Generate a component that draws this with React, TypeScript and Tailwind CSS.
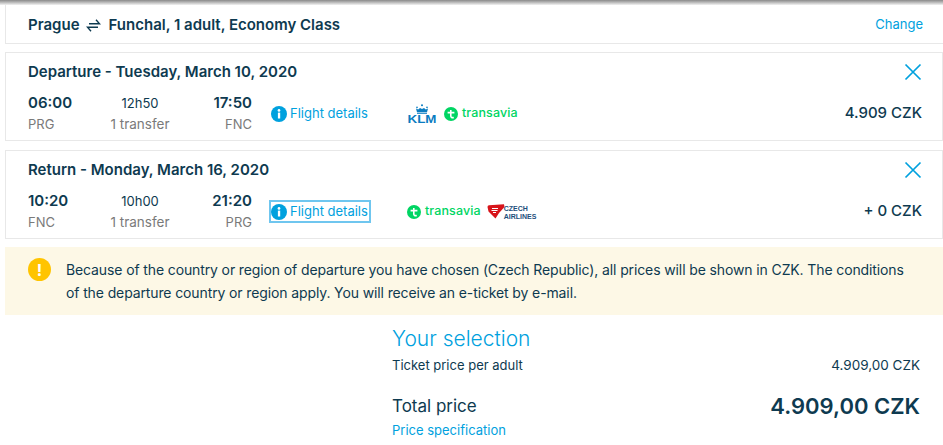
import React from 'react';

const InfoIcon = () => (
    <svg width="16" height="16" viewBox="0 0 16 16" className="shrink-0">
        <circle cx="8" cy="8" r="8" fill="#00a1de" />
        <rect x="6.9" y="6.6" width="2.3" height="5.9" fill="#fff" />
        <circle cx="8" cy="4.4" r="1.35" fill="#fff" />
    </svg>
);

const CloseIcon = () => (
    <svg width="18" height="18" viewBox="0 0 18 18" fill="none" stroke="#00a1de" strokeWidth="1.7" className="shrink-0">
        <path d="M1.5 1.5l15 15M16.5 1.5l-15 15" />
    </svg>
);

const SwapIcon = () => (
    <svg width="15" height="15" viewBox="0 0 15 15" fill="none" stroke="#0e3a50" strokeWidth="1.4" className="shrink-0">
        <path d="M3 5.8h10.5L10 1.8" />
        <path d="M12 9.2H1.5L5 13.2" />
    </svg>
);

const KlmLogo = () => (
    <svg width="30" height="22" viewBox="0 0 30 22" className="shrink-0">
        <g fill="#0a7cc1">
            <circle cx="15" cy="2.2" r="1" />
            <circle cx="10" cy="4.4" r="0.8" />
            <circle cx="20" cy="4.4" r="0.8" />
            <path d="M9 5.6l2.2 1 1.8-1.6 2 1 2-1 1.8 1.6 2.2-1-1 3.6H10z" />
            <rect x="10" y="9.8" width="10" height="1" />
        </g>
        <text x="15" y="19.6" textAnchor="middle" fontFamily="'Liberation Sans', sans-serif" fontWeight="700" fontSize="11" fill="#0a7cc1" textLength="29" lengthAdjust="spacingAndGlyphs">KLM</text>
    </svg>
);

const TransaviaLogo = () => (
    <div className="flex items-center gap-[4px] shrink-0">
        <svg width="14" height="14" viewBox="0 0 14 14">
            <circle cx="7" cy="7" r="7" fill="#00d563" />
            <path d="M3.6 5.6h6.8M6.8 3v6c0 1.4 1.1 1.9 3 1.4" fill="none" stroke="#fff" strokeWidth="1.6" />
        </svg>
        <span className="text-[12.5px] leading-none font-medium tracking-[0.1px] text-[#00d563]">transavia</span>
    </div>
);

const CsaLogo = () => (
    <div className="flex items-center shrink-0 -ml-[1px]">
        <svg width="18" height="15" viewBox="0 0 18 15">
            <path d="M0.5 3Q0.5 1.5 2 1.3L17 0.3 17.5 3 12 9 8.5 14.5Q4 10 1.5 7.5z" fill="#d7141a" />
            <path d="M5 4.5h6M4.5 6.5h6M6 8.5h3" stroke="#fff" strokeWidth="1" />
        </svg>
        <span className="font-['Liberation_Sans',sans-serif] text-[7px] leading-[8px] font-bold text-[#1d4f7c] -ml-[1px] mt-[3px]">
            CZECH<br />AIRLINES
        </span>
    </div>
);

interface FlightCardProps {
    title: string;
    depart: string;
    from: string;
    duration: string;
    arrive: string;
    to: string;
    price: string;
    focused?: boolean;
    logos: React.ReactNode;
}

const FlightCard: React.FC<FlightCardProps> = ({ title, depart, from, duration, arrive, to, price, focused, logos }) => (
    <div className="h-[89px] ml-[5px] border border-[#e8e8e8] pl-[22px] pr-[20px] flex flex-col">
        <div className="flex items-start justify-between pt-[9px] h-[40px]">
            <h2 className="text-[15px] leading-[20px] font-semibold text-[#0e3a50]">{title}</h2>
            <div className="mt-[1px]"><CloseIcon /></div>
        </div>
        <div className="flex items-center">
            <div className="w-[224px] grid grid-cols-[1fr_1fr_1fr] shrink-0">
                <div className="text-[15px] leading-[20px] font-semibold text-[#0e3a50]">{depart}</div>
                <div className="text-[13px] leading-[20px] text-center text-[#0e3a50]">{duration}</div>
                <div className="text-[15px] leading-[20px] font-semibold text-right text-[#0e3a50]">{arrive}</div>
                <div className="text-[13px] leading-[20px] mt-[1px] text-[#7a7a7a]">{from}</div>
                <div className="text-[13.5px] leading-[20px] mt-[1px] text-center text-[#7a7a7a]">1 transfer</div>
                <div className="text-[13px] leading-[20px] mt-[1px] text-right text-[#7a7a7a]">{to}</div>
            </div>
            <a className={focused ? "ml-[18px] flex items-center gap-[3px] h-[21px] w-[100px] outline-2 outline-[#6fc6ef] -outline-offset-1 text-[13px] text-[#00a1de] pl-[1px] shrink-0 whitespace-nowrap" : "ml-[19px] flex items-center gap-[3px] h-[21px] w-[99px] text-[13px] text-[#00a1de] shrink-0 whitespace-nowrap"}>
                <InfoIcon />
                <span>Flight details</span>
            </a>
            <div className="ml-[37px] flex items-center gap-[7px]">{logos}</div>
            <div className="ml-auto text-[15px] font-medium text-[#0e3a50]">{price}</div>
        </div>
    </div>
);

export default function App() {
    return (
        <div className="w-[943px] h-[445px] overflow-hidden bg-white font-['Inter',sans-serif] text-[#0e3a50]">
            <div className="h-[5px] bg-gradient-to-b from-[#8a8a8a] to-[#f2f2f2]" />
            <div className="h-[39px] ml-[5px] border-b border-l border-[#e8e8e8] pl-[22px] pr-[20px] pt-[2px] flex items-center justify-between">
                <div className="flex items-center text-[15px] font-semibold">
                    <span>Prague</span>
                    <span className="ml-[6px] mr-[8px]"><SwapIcon /></span>
                    <span>Funchal, 1 adult, Economy Class</span>
                </div>
                <a className="text-[13px] text-[#00a1de]">Change</a>
            </div>

            <div className="mt-[8px] flex flex-col gap-[9px]">
                <FlightCard
                    title="Departure - Tuesday, March 10, 2020"
                    depart="06:00"
                    from="PRG"
                    duration="12h50"
                    arrive="17:50"
                    to="FNC"
                    price="4.909 CZK"
                    logos={<><KlmLogo /><TransaviaLogo /></>}
                />
                <FlightCard
                    title="Return - Monday, March 16, 2020"
                    depart="10:20"
                    from="FNC"
                    duration="10h00"
                    arrive="21:20"
                    to="PRG"
                    price="+ 0 CZK"
                    focused
                    logos={<><TransaviaLogo /><CsaLogo /></>}
                />
            </div>

            <div className="mt-[8px] ml-[5px] h-[68px] bg-[#fdf8e6] flex pl-[23px] pt-[11px]">
                <div className="w-[23px] h-[23px] rounded-full bg-[#ffc400] text-white flex items-center justify-center text-[16px] font-bold shrink-0">!</div>
                <p className="ml-[15px] w-[850px] text-[14px] leading-[23px] tracking-[-0.12px]">
                    Because of the country or region of departure you have chosen (Czech Republic), all prices will be shown in CZK. The conditions of the departure country or region apply. You will receive an e-ticket by e-mail.
                </p>
            </div>

            <div className="ml-[392px] w-[528px] mt-[10px]">
                <h3 className="text-[21px] leading-[28px] font-light text-[#00a1de]">Your selection</h3>
                <div className="mt-[2px] flex justify-between items-center text-[13px] leading-[20px]">
                    <span>Ticket price per adult</span>
                    <span className="text-[13.5px]">4.909,00 CZK</span>
                </div>
                <div className="mt-[16px] flex justify-between items-center">
                    <span className="text-[17px] leading-[30px]">Total price</span>
                    <span className="text-[22px] leading-[30px] font-semibold">4.909,00 CZK</span>
                </div>
                <a className="block -mt-[1px] text-[13px] leading-[20px] text-[#00a1de]">Price specification</a>
            </div>
        </div>
    );
}
